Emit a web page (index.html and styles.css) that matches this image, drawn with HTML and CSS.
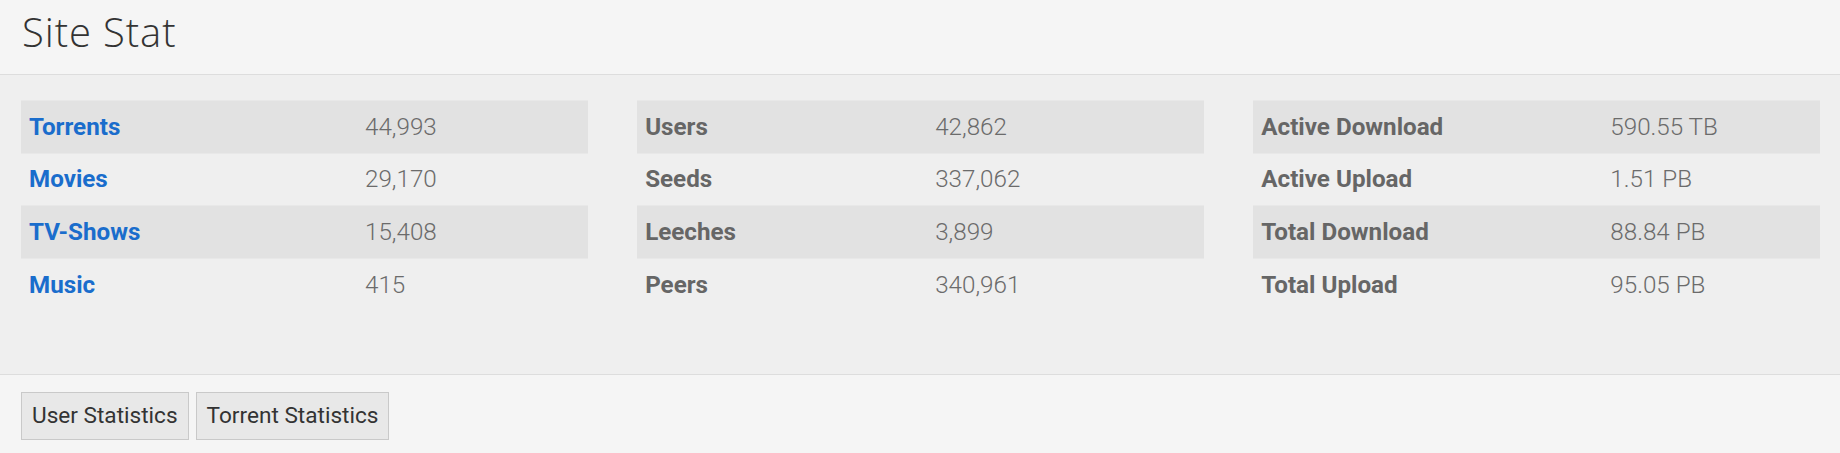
FILE: index.html
```html
<!DOCTYPE html>
<html lang="en">
<head>
<meta charset="utf-8">
<title>Site Stat</title>
<link rel="stylesheet" href="styles.css">
</head>
<body>
<div class="card">
  <header class="card-header">
    <h1 class="title">Site Stat</h1>
  </header>
  <section class="card-body">
    <table class="stats stats-content">
      <tbody>
        <tr><td class="k"><a href="#">Torrents</a></td><td class="v">44,993</td></tr>
        <tr><td class="k"><a href="#">Movies</a></td><td class="v">29,170</td></tr>
        <tr><td class="k"><a href="#">TV-Shows</a></td><td class="v">15,408</td></tr>
        <tr><td class="k"><a href="#">Music</a></td><td class="v">415</td></tr>
      </tbody>
    </table>
    <table class="stats stats-peers">
      <tbody>
        <tr><td class="k">Users</td><td class="v">42,862</td></tr>
        <tr><td class="k">Seeds</td><td class="v">337,062</td></tr>
        <tr><td class="k">Leeches</td><td class="v">3,899</td></tr>
        <tr><td class="k">Peers</td><td class="v">340,961</td></tr>
      </tbody>
    </table>
    <table class="stats stats-traffic">
      <tbody>
        <tr><td class="k">Active Download</td><td class="v">590.55 TB</td></tr>
        <tr><td class="k">Active Upload</td><td class="v">1.51 PB</td></tr>
        <tr><td class="k">Total Download</td><td class="v">88.84 PB</td></tr>
        <tr><td class="k">Total Upload</td><td class="v">95.05 PB</td></tr>
      </tbody>
    </table>
  </section>
  <footer class="card-footer">
    <button class="btn" type="button">User Statistics</button>
    <button class="btn" type="button">Torrent Statistics</button>
  </footer>
</div>
</body>
</html>
```

FILE: styles.css
```css
* { box-sizing: border-box; }

html, body {
  margin: 0;
  padding: 0;
  background: #efefef;
}

body {
  font-family: Roboto, "Liberation Sans", Arial, sans-serif;
  color: #666;
}

.card {
  width: 1840px;
  height: 453px;
  display: flex;
  flex-direction: column;
  overflow: hidden;
}

.card-header {
  flex: 0 0 75px;
  padding: 0 22px 10px;
  background: #f5f5f5;
  border-bottom: 1px solid #dddddd;
}

.title {
  margin: 0;
  font-family: "Open Sans", "Noto Sans", sans-serif;
  font-weight: 300;
  font-size: 40px;
  line-height: 64px;
  color: #333;
  letter-spacing: 0.9px;
}

.card-body {
  flex: 0 0 299px;
  padding: 25px 20px 0 21px;
  background: #efefef;
  display: grid;
  grid-template-columns: repeat(3, 1fr);
  column-gap: 49.5px;
  align-items: start;
}

.stats {
  width: 100%;
  border-collapse: collapse;
  font-size: 24.2px;
  line-height: 34.5px;
}

.stats tr {
  border-top: 1px solid #e8e8e8;
}

.stats tr:nth-child(odd) {
  background: #e2e2e2;
}

.stats td {
  padding: 8.6px 8px 8.6px 8px;
  vertical-align: middle;
  white-space: nowrap;
}

.stats .k {
  font-weight: 700;
  color: #666;
}

.stats .v {
  font-weight: 300;
  color: #6b6b6b;
}

.stats a {
  color: #1a6dcc;
  text-decoration: none;
}

.stats-content .k { width: 336px; }
.stats-peers .k { width: 290px; }
.stats-traffic .k { width: 349px; }

.card-footer {
  flex: 1 1 auto;
  background: #f5f5f5;
  border-top: 1px solid #dddddd;
  padding: 17px 21px 0;
  display: flex;
  align-items: flex-start;
  gap: 7px;
}

.btn {
  margin: 0;
  font-family: Roboto, "Liberation Sans", Arial, sans-serif;
  font-size: 22.6px;
  line-height: 34px;
  padding: 6px 10px;
  color: #333;
  background: #e8e8e8;
  border: 1px solid #c9c9c9;
  border-radius: 0;
}
```
